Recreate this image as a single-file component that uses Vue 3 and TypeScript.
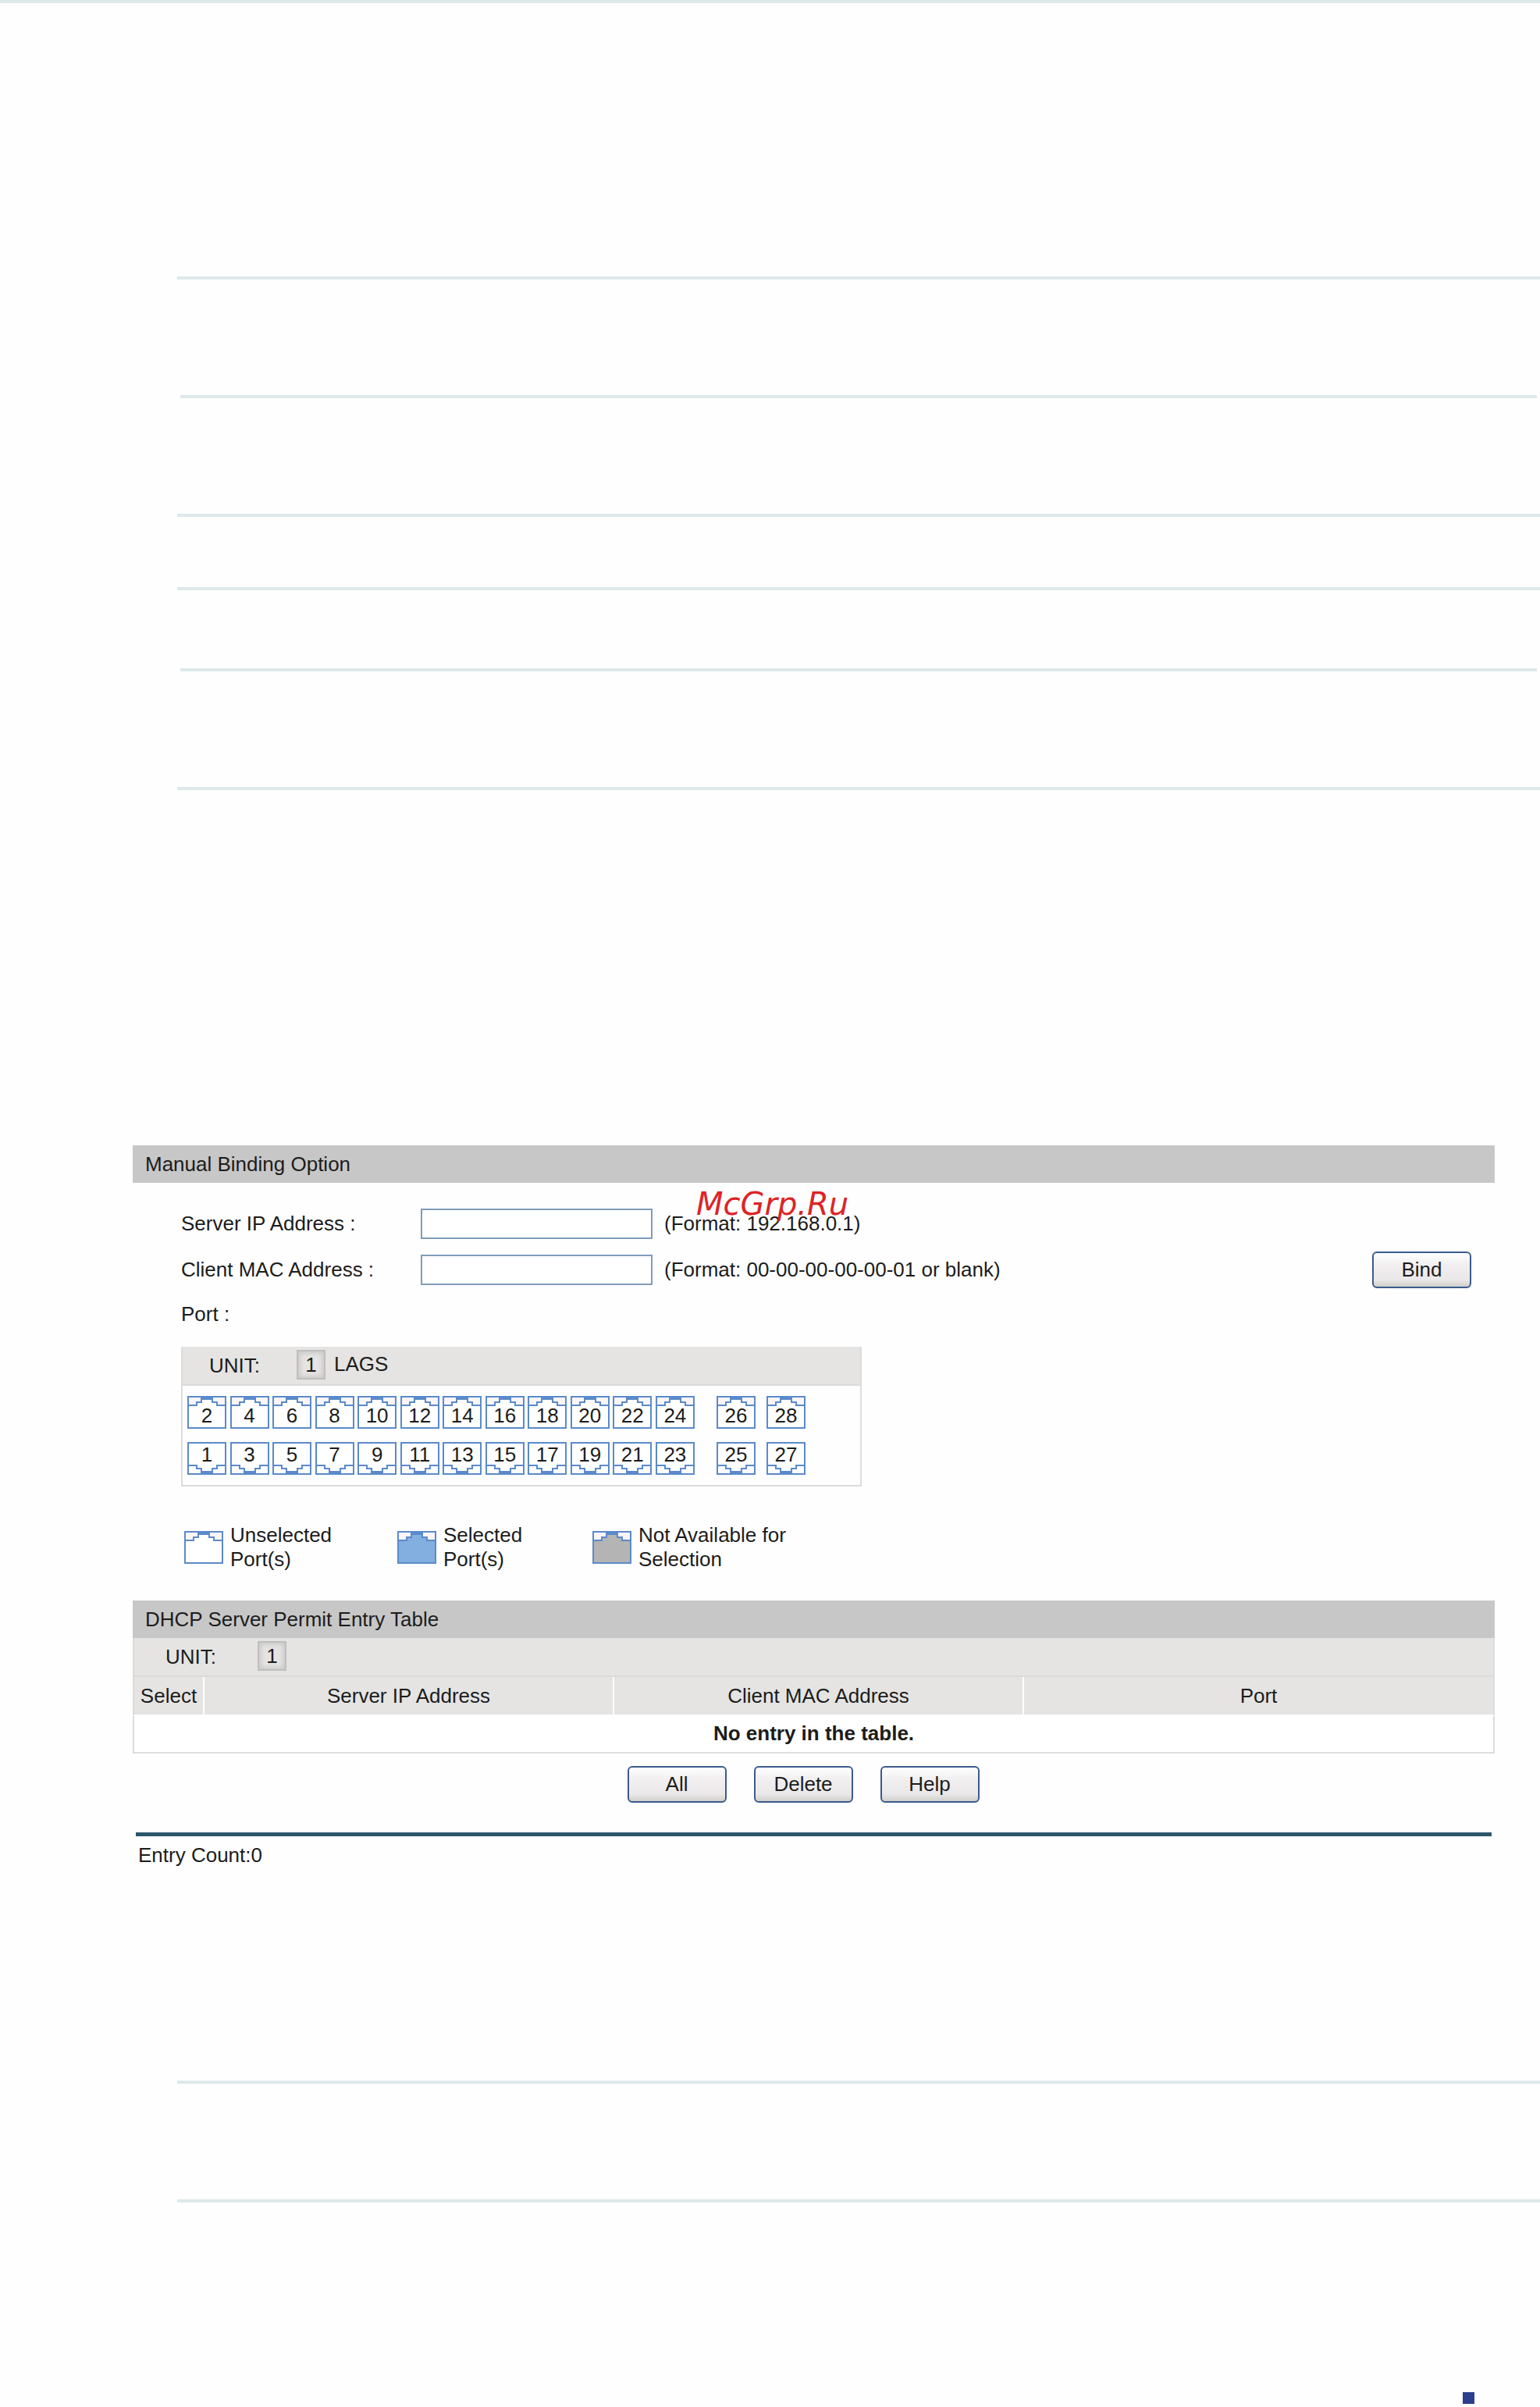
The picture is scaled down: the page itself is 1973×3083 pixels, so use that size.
<script setup lang="ts">
import { ref } from 'vue'

const serverIp = ref('')
const clientMac = ref('')

const topRow = [2, 4, 6, 8, 10, 12, 14, 16, 18, 20, 22, 24]
const bottomRow = [1, 3, 5, 7, 9, 11, 13, 15, 17, 19, 21, 23]
const rows = [
  { name: 'even', main: topRow, uplink: [26, 28] },
  { name: 'odd', main: bottomRow, uplink: [25, 27] },
]

const legend = [
  { kind: 'free', lines: ['Unselected', 'Port(s)'] },
  { kind: 'picked', lines: ['Selected', 'Port(s)'] },
  { kind: 'blocked', lines: ['Not Available for', 'Selection'] },
]

const body = 'M1 12H12V8H18V4H32V8H38V12H49V41H1Z'
const cap = 'M17 1H33V5H17Z'
</script>

<template>
  <main class="page">
    <div class="rules upper">
      <div class="band tall"></div>
      <div class="band tall inset"></div>
      <div class="band short"></div>
      <div class="band medium"></div>
      <div class="band tall inset"></div>
      <div class="band last"></div>
    </div>

    <div class="content">
      <section class="binding">
        <h2 class="title">Manual Binding Option</h2>
        <span class="watermark">McGrp.Ru</span>
        <form class="form" @submit.prevent>
          <div class="row">
            <label class="name" for="server-ip">Server IP Address :</label>
            <input id="server-ip" v-model="serverIp" class="field" type="text" />
            <span class="hint">(Format: 192.168.0.1)</span>
          </div>
          <div class="row">
            <label class="name" for="client-mac">Client MAC Address :</label>
            <input id="client-mac" v-model="clientMac" class="field" type="text" />
            <span class="hint">(Format: 00-00-00-00-00-01 or blank)</span>
            <button class="btn bind" type="submit">Bind</button>
          </div>
          <div class="port-label">Port :</div>

          <div class="ports">
            <div class="unit-bar">
              <span class="unit">UNIT:</span>
              <button class="unit-no" type="button">1</button>
              <button class="lags" type="button">LAGS</button>
            </div>
            <div class="port-grid">
              <div v-for="r in rows" :key="r.name" class="port-row" :class="r.name">
                <div class="main-ports">
                  <button v-for="n in r.main" :key="n" class="port" type="button">
                    <svg class="jack free" viewBox="0 0 50 42" aria-hidden="true">
                      <rect class="frame" x="1" y="1" width="48" height="40" />
                      <path class="body" :d="body" />
                      <path class="cap" :d="cap" />
                    </svg>
                    <span class="num">{{ n }}</span>
                  </button>
                </div>
                <div class="uplink-ports">
                  <button v-for="n in r.uplink" :key="n" class="port" type="button">
                    <svg class="jack free" viewBox="0 0 50 42" aria-hidden="true">
                      <rect class="frame" x="1" y="1" width="48" height="40" />
                      <path class="body" :d="body" />
                      <path class="cap" :d="cap" />
                    </svg>
                    <span class="num">{{ n }}</span>
                  </button>
                </div>
              </div>
            </div>
          </div>

          <ul class="legend">
            <li v-for="item in legend" :key="item.kind" class="legend-item">
              <svg class="jack" :class="item.kind" viewBox="0 0 50 42" aria-hidden="true">
                <rect class="frame" x="1" y="1" width="48" height="40" />
                <path class="body" :d="body" />
                <path class="cap" :d="cap" />
              </svg>
              <span>{{ item.lines[0] }}<br />{{ item.lines[1] }}</span>
            </li>
          </ul>
        </form>
      </section>

      <section class="entries">
        <h2 class="title">DHCP Server Permit Entry Table</h2>
        <div class="unit-bar wide">
          <span class="unit">UNIT:</span>
          <button class="unit-no" type="button">1</button>
        </div>
        <table class="table">
          <colgroup>
            <col class="col-select" />
            <col class="col-wide" />
            <col class="col-wide" />
            <col />
          </colgroup>
          <thead>
            <tr>
              <th>Select</th>
              <th>Server IP Address</th>
              <th>Client MAC Address</th>
              <th>Port</th>
            </tr>
          </thead>
          <tbody>
            <tr>
              <td colspan="4">No entry in the table.</td>
            </tr>
          </tbody>
        </table>
        <div class="actions">
          <button class="btn" type="button">All</button>
          <button class="btn" type="button">Delete</button>
          <button class="btn" type="button">Help</button>
        </div>
        <hr class="divider" />
        <p class="count">Entry Count:0</p>
      </section>
    </div>

    <div class="rules lower">
      <div class="band tall"></div>
      <div class="band closing"></div>
    </div>
    <div class="marker"></div>
  </main>
</template>

<style>
body {
  background: #fefefe;
}
</style>

<style scoped>
.page {
  box-sizing: border-box;
  border-top: 4px solid #dde8eb;
  color: #1c1c1c;
  font-family: "Liberation Sans", Arial, sans-serif;
  font-size: 26px;
}
.page *,
.page *::before {
  box-sizing: border-box;
}
button,
input {
  font: inherit;
  color: inherit;
  margin: 0;
  padding: 0;
}
.rules {
  padding-left: 227px;
}
.upper {
  padding-top: 350px;
}
.band {
  border-top: 4px solid #dde8eb;
}
.band.inset {
  margin: 0 4px;
}
.tall {
  height: 152px;
}
.short {
  height: 94px;
}
.medium {
  height: 104px;
}
.last {
  height: 459px;
}
.closing {
  height: 247px;
}
.content {
  padding: 0 58px 0 170px;
}
.title {
  margin: 0;
  padding-left: 16px;
  background: #c7c7c7;
  font-size: 26px;
  font-weight: normal;
  line-height: 48px;
}
.binding {
  position: relative;
}
.watermark {
  position: absolute;
  left: 722px;
  top: 51px;
  color: #dd2427;
  font-family: "DejaVu Sans", sans-serif;
  font-size: 40px;
  font-style: italic;
  line-height: 48px;
}
.form {
  padding: 23px 30px 0 62px;
}
.row {
  display: flex;
  align-items: center;
  height: 59px;
}
.name {
  width: 307px;
}
.field {
  width: 297px;
  height: 39px;
  margin-right: 15px;
  padding: 0 8px;
  border: 2px solid #7f9db9;
  background: #fff;
}
.btn {
  width: 127px;
  height: 47px;
  border: 2px solid #3b5b8c;
  border-radius: 6px;
  background: linear-gradient(#fff, #f1eff0 35%, #e9e7e8 80%, #cfcfca);
}
.bind {
  margin-left: auto;
}
.port-label {
  line-height: 54px;
}
.ports {
  width: 872px;
  margin-top: 15px;
  border: 2px solid #dcdcdc;
  border-top: 0;
}
.unit-bar {
  display: flex;
  align-items: flex-start;
  height: 50px;
  padding-left: 34px;
  border-bottom: 2px solid #dadad9;
  background: #e5e4e2;
}
.unit {
  width: 112px;
  line-height: 48px;
}
.unit-no {
  width: 37px;
  height: 38px;
  margin-top: 4px;
  border: 2px solid #bfbfbf;
  background: #e5e4e2;
  box-shadow: inset 0 0 6px 2px #c6c6c6;
  line-height: 32px;
}
.lags {
  margin-left: 11px;
  border: 0;
  background: none;
  line-height: 44px;
}
.port-grid {
  display: flex;
  flex-direction: column;
  gap: 17px;
  padding: 13px 6px;
}
.port-row {
  display: flex;
  gap: 28px;
}
.main-ports {
  display: flex;
  justify-content: space-between;
  width: 650px;
}
.uplink-ports {
  display: flex;
  gap: 14px;
}
.port {
  display: grid;
  width: 50px;
  height: 42px;
  border: 0;
  background: none;
}
.port > * {
  grid-area: 1 / 1;
}
.num {
  z-index: 1;
  padding-top: 9px;
  line-height: 33px;
  text-align: center;
}
.odd .num {
  padding-top: 0;
}
.odd .jack {
  transform: scaleY(-1);
}
.jack {
  display: block;
  width: 50px;
  height: 42px;
}
.frame {
  fill: #fbf5f8;
  stroke: #5b8aca;
  stroke-width: 2;
}
.odd .frame {
  fill: #fff;
}
.body {
  fill: #fff;
  stroke: #5b8aca;
  stroke-width: 2;
}
.picked .body {
  fill: #82afe0;
}
.blocked .body {
  fill: #b4b4b4;
}
.cap {
  fill: #5b8aca;
}
.legend {
  display: grid;
  grid-template-columns: 273px 250px auto;
  margin: 47px 0 37px;
  padding: 0 0 0 4px;
  list-style: none;
}
.legend-item {
  display: flex;
  align-items: center;
  gap: 9px;
  line-height: 31px;
}
.unit-bar.wide {
  padding-left: 40px;
  border-left: 2px solid #dcdcdc;
  border-right: 2px solid #dcdcdc;
}
.wide .unit {
  width: 118px;
}
.table {
  width: 100%;
  border-collapse: separate;
  border-spacing: 0;
  table-layout: fixed;
}
.col-select {
  width: 92px;
}
.col-wide {
  width: 525px;
}
th {
  height: 50px;
  padding: 0;
  border-right: 2px solid #fff;
  border-bottom: 2px solid #fff;
  background: #e5e4e2;
  font-weight: normal;
  line-height: 48px;
}
th:first-child {
  border-left: 2px solid #dcdcdc;
}
th:last-child {
  border-right: 2px solid #dcdcdc;
}
td {
  height: 48px;
  padding: 0 0 2px;
  border: 2px solid #dcdcdc;
  border-top: 0;
  background: #fff;
  font-weight: bold;
  line-height: 44px;
  text-align: center;
}
.actions {
  display: flex;
  justify-content: center;
  gap: 35px;
  padding: 16px 27px 38px 0;
}
.divider {
  height: 5px;
  margin: 0 4px;
  border: 0;
  background: #2b576a;
}
.count {
  margin: 0;
  padding-left: 7px;
  line-height: 48px;
}
.lower {
  padding-top: 265px;
}
.marker {
  width: 15px;
  height: 15px;
  margin: 0 84px 4px auto;
  background: #2b3f8e;
}
</style>
